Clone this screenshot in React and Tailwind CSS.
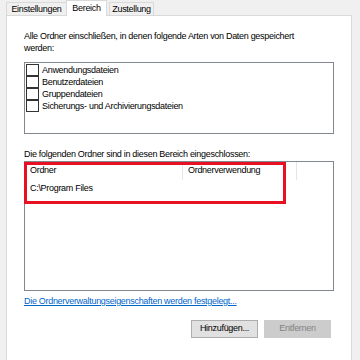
export default function App() {
  const f = { fontFamily: '"Liberation Sans", Arial, sans-serif', letterSpacing: '-0.3px' };
  const Check = ({ label }) => (
    <div className="flex items-center h-[12px]">
      <div className="w-[13px] h-[12px] border border-[#333] bg-white box-border shrink-0" />
      <span className="ml-[3px] leading-[12px]">{label}</span>
    </div>
  );
  return (
    <div className="w-[360px] h-[360px] bg-[#f0f0f0] text-[9px] text-[#000] overflow-hidden" style={f}>
      <div className="flex items-end h-[15px] pl-[6px]">
        <div className="h-[13px] w-[61px] border border-b-0 border-[#d9d9d9] bg-[#f0f0f0] leading-[12px] flex justify-center">Einstellungen</div>
        <div className="h-[16px] w-[41px] border border-b-0 border-[#d9d9d9] bg-white leading-[14px] flex justify-center -ml-[1px] -mb-[1px] z-10">Bereich</div>
        <div className="h-[13px] w-[45px] border border-b-0 border-[#d9d9d9] bg-[#f0f0f0] leading-[12px] flex justify-center ml-[2px]">Zustellung</div>
      </div>
      <div className="ml-[6px] w-[346px] h-[346px] bg-white border border-[#d9d9d9] pl-[17px]">
        <div className="pt-[14px] leading-[12px]">
          Alle Ordner einschließen, in denen folgende Arten von Daten gespeichert<br />werden:
        </div>
        <div className="mt-[8px] w-[310px] h-[72px] border border-[#828790] pl-[1px] pt-[1px]">
          <Check label="Anwendungsdateien" />
          <Check label="Benutzerdateien" />
          <Check label="Gruppendateien" />
          <Check label="Sicherungs- und Archivierungsdateien" />
        </div>
        <div className="mt-[14px] leading-[12px]">Die folgenden Ordner sind in diesen Bereich eingeschlossen:</div>
        <div className="mt-[1px] w-[310px] h-[130px] border border-[#828790] relative">
          <div className="flex h-[18px] items-center">
            <div className="w-[158px] pl-[5px] h-full flex items-center border-r border-[#e5e5e5]">Ordner</div>
            <div className="w-[114px] pl-[5px] h-full flex items-center border-r border-[#e5e5e5]">Ordnerverwendung</div>
          </div>
          <div className="pl-[5px] h-[18px] flex items-center">C:\Program Files</div>
          <div className="absolute left-[-1px] top-[0px] w-[262px] h-[42px] border-[3px] border-[#e81123]" />
        </div>
        <div className="mt-[4px] text-[#0066cc] underline leading-[12px]">Die Ordnerverwaltungseigenschaften werden festgelegt...</div>
        <div className="flex mt-[13px] ml-[167px] gap-[6px]">
          <div className="w-[67px] h-[18px] bg-[#e1e1e1] border border-[#adadad] flex items-center justify-center">Hinzufügen...</div>
          <div className="w-[67px] h-[18px] bg-[#cccccc] border border-[#cccccc] text-[#838383] flex items-center justify-center">Entfernen</div>
        </div>
      </div>
    </div>
  );
}
